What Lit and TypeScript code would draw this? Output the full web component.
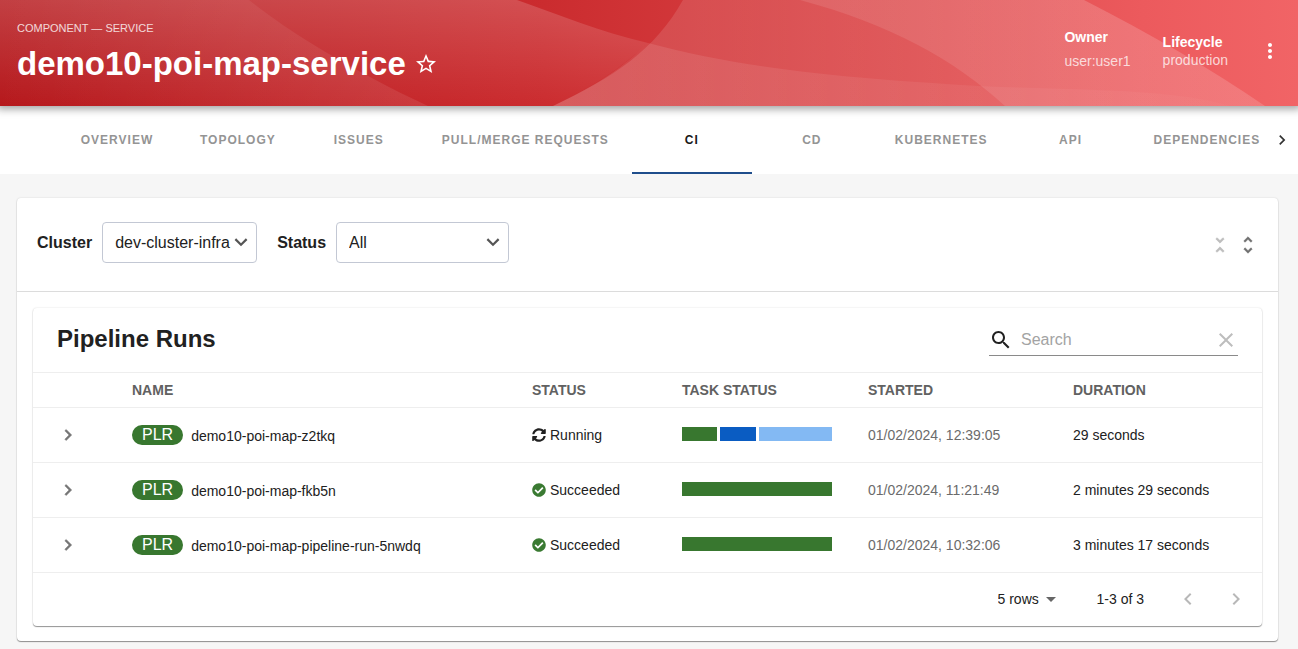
import { LitElement, html, css, svg, nothing } from "lit";
import { customElement, property, state } from "lit/decorators.js";

const ICONS: Record<string, string> = {
  star: "M22 9.24l-7.19-.62L12 2 9.19 8.63 2 9.24l5.46 4.73L5.82 21 12 17.27 18.18 21l-1.63-7.03L22 9.24zM12 15.4l-3.76 2.27 1-4.28-3.32-2.88 4.38-.38L12 6.1l1.71 4.04 4.38.38-3.32 2.88 1 4.28L12 15.4z",
  more: "M12 8c1.1 0 2-.9 2-2s-.9-2-2-2-2 .9-2 2 .9 2 2 2zm0 2c-1.1 0-2 .9-2 2s.9 2 2 2 2-.9 2-2-.9-2-2-2zm0 6c-1.1 0-2 .9-2 2s.9 2 2 2 2-.9 2-2-.9-2-2-2z",
  right: "M10 6L8.59 7.41 13.17 12l-4.58 4.59L10 18l6-6z",
  left: "M15.41 7.41L14 6l-6 6 6 6 1.41-1.41L10.83 12z",
  down: "M6.7 6.9L12 12.17l5.3-5.27L19 8.6l-7 7-7-7z",
  search:
    "M15.5 14h-.79l-.28-.27C15.41 12.59 16 11.11 16 9.5 16 5.91 13.09 3 9.5 3S3 5.91 3 9.5 5.91 16 9.5 16c1.61 0 3.09-.59 4.23-1.57l.27.28v.79l5 4.99L20.49 19l-4.99-5zm-6 0C7.01 14 5 11.99 5 9.5S7.01 5 9.5 5 14 7.01 14 9.5 11.99 14 9.5 14z",
  clear:
    "M19 6.41L17.59 5 12 10.59 6.41 5 5 6.41 10.59 12 5 17.59 6.41 19 12 13.41 17.59 19 19 17.59 13.41 12z",
  caret: "M7 10l5 5 5-5z",
  collapse:
    "M7.41 18.59L8.83 20 12 16.83 15.17 20l1.41-1.41L12 14l-4.59 4.59zm9.18-13.18L15.17 4 12 7.17 8.83 4 7.41 5.41 12 10l4.59-4.59z",
  expand:
    "M12 5.83L15.17 9l1.41-1.41L12 3 7.41 7.59 8.83 9 12 5.83zm0 12.34L8.83 15l-1.41 1.41L12 21l4.59-4.59L15.17 15 12 18.17z",
};

const SYNC =
  "M370.72 133.28C339.458 104.008 298.888 87.962 255.848 88c-77.458.068-144.328 53.178-162.791 126.85-1.344 5.363-6.122 9.15-11.651 9.15H24.103c-7.498 0-13.194-6.807-11.807-14.176C33.933 94.924 134.813 8 256 8c66.448 0 126.791 26.136 171.315 68.685L463.03 40.97C478.149 25.851 504 36.559 504 57.941V192c0 13.255-10.745 24-24 24H345.941c-21.382 0-32.09-25.851-16.971-40.971l41.75-41.749zM32 296h134.059c21.382 0 32.09 25.851 16.971 40.971l-41.75 41.75c31.262 29.273 71.835 45.319 114.876 45.28 77.418-.07 144.315-53.144 162.787-126.849 1.344-5.363 6.122-9.15 11.651-9.15h57.304c7.498 0 13.194 6.807 11.807 14.176C478.067 417.076 377.187 504 256 504c-66.448 0-126.791-26.136-171.315-68.685L48.97 471.03C33.851 486.149 8 475.441 8 454.059V320c0-13.255 10.745-24 24-24z";
const CHECK =
  "M504 256c0 136.967-111.033 248-248 248S8 392.967 8 256 119.033 8 256 8s248 111.033 248 248zM227.314 387.314l184-184c6.248-6.248 6.248-16.379 0-22.627l-22.627-22.627c-6.248-6.248-16.379-6.249-22.628 0L216 308.118l-70.059-70.059c-6.248-6.248-16.379-6.248-22.628 0l-22.627 22.627c-6.248 6.248-6.248 16.379 0 22.627l104 104c6.249 6.249 16.379 6.249 22.628.001z";

const icon = (name: string, size = 24) => html`<svg
  width=${size}
  height=${size}
  viewBox="0 0 24 24"
  fill="currentColor"
  aria-hidden="true"
>
  <path d=${ICONS[name]}></path>
</svg>`;

const base = css`
  *,
  *::before,
  *::after {
    box-sizing: border-box;
  }
  svg {
    display: block;
    flex: none;
  }
  button {
    display: inline-flex;
    align-items: center;
    justify-content: center;
    padding: 0;
    border: 0;
    background: none;
    color: inherit;
    font: inherit;
    cursor: pointer;
  }
  button:disabled {
    cursor: default;
  }
  select,
  input {
    margin: 0;
    border: 0;
    border-radius: 0;
    outline: 0;
    background: none;
    color: inherit;
    font: inherit;
    appearance: none;
  }
`;

@customElement("entity-header")
class EntityHeader extends LitElement {
  @state() private starred = false;

  static styles = [
    base,
    css`
      :host {
        display: block;
        position: relative;
        z-index: 1;
        color: #fff;
        background: linear-gradient(90deg, #b5161a 0%, #cb2c2f 42%, #de4a4c 72%, #ec5a5d 88%, #f16466 100%);
        box-shadow: 0 0 8px 3px rgba(20, 20, 20, 0.4);
      }
      .wave {
        position: absolute;
        inset: 0;
        width: 100%;
        height: 100%;
      }
      .bar {
        position: relative;
        display: flex;
        align-items: center;
        min-height: 106px;
        padding: 0 16px 4px 17px;
      }
      .heading {
        flex: 1;
        min-width: 0;
        padding-top: 2px;
      }
      .kind {
        margin: 0;
        font-size: 11px;
        line-height: 16px;
        opacity: 0.8;
      }
      .title {
        display: flex;
        align-items: center;
        gap: 8px;
        margin-top: 8px;
      }
      h1 {
        margin: 0;
        font-size: 33px;
        line-height: 40px;
      }
      dl {
        display: flex;
        align-items: center;
        gap: 32px;
        margin: 0 30px 0 0;
        font-size: 14px;
        line-height: 18px;
      }
      dt {
        font-weight: 700;
      }
      dd {
        margin: 0;
        color: rgba(255, 255, 255, 0.75);
      }
      dd a {
        color: inherit;
        text-decoration: none;
      }
      .loose {
        padding-bottom: 4px;
        line-height: 24px;
      }
    `,
  ];

  private wave() {
    const fade = (id: string, from: number, to: number, x2 = "0", y2 = "1") => svg`
      <linearGradient id=${id} x1="0" y1="0" x2=${x2} y2=${y2}>
        <stop offset="0" stop-color="#fff" stop-opacity=${from}></stop>
        <stop offset="1" stop-color="#fff" stop-opacity=${to}></stop>
      </linearGradient>`;
    return html`<svg class="wave" viewBox="0 0 1298 106" preserveAspectRatio="none" aria-hidden="true">
      <defs>
        ${fade("a", 0.01, 0.09, "1", "0")} ${fade("b", 0.17, 0)} ${fade("c", 0.13, 0.06, "1", "0")}
        ${fade("d", 0.11, 0.02, "1", "0")} ${fade("e", 0.1, 0.1)}
      </defs>
      <path fill="url(#b)" d="M0 0H517C560 15 600 32 648 43C622 68 590 88 553 106H0Z"></path>
      <path fill="url(#a)" d="M0 0H249C284 28 345 67 428 106H0Z"></path>
      <path fill="url(#c)" d="M683 0C655 50 614 77 553 106H1265C1210 68 1150 34 1084 0Z"></path>
      <path fill="url(#d)" d="M648 43C614 75 590 88 553 106H1230C1180 91 1110 90 1000 87C850 79 745 69 648 43Z"></path>
      <path fill="url(#e)" d="M800 0C890 24 955 60 1005 106H1265C1210 68 1150 34 1084 0Z"></path>
    </svg>`;
  }

  render() {
    return html`<header>
      ${this.wave()}
      <div class="bar">
        <div class="heading">
          <p class="kind">COMPONENT — SERVICE</p>
          <div class="title">
            <h1>demo10-poi-map-service</h1>
            <button
              aria-label="Add to favorites"
              aria-pressed=${this.starred}
              @click=${() => (this.starred = !this.starred)}
            >
              ${icon("star")}
            </button>
          </div>
        </div>
        <dl>
          <div class="loose">
            <dt>Owner</dt>
            <dd><a href="#user1">user:user1</a></dd>
          </div>
          <div>
            <dt>Lifecycle</dt>
            <dd>production</dd>
          </div>
        </dl>
        <button aria-label="More">${icon("more")}</button>
      </div>
    </header>`;
  }
}

@customElement("entity-tabs")
class EntityTabs extends LitElement {
  @state() private active = "CI";

  static styles = [
    base,
    css`
      :host {
        display: flex;
        background: #fff;
      }
      nav {
        display: flex;
        flex: 1;
        min-width: 0;
        overflow: hidden;
        padding-left: 57px;
      }
      a {
        display: flex;
        flex: none;
        align-items: center;
        justify-content: center;
        min-width: 120px;
        height: 68px;
        padding: 2px 23px 0;
        border-bottom: 2px solid transparent;
        color: #949494;
        font-size: 12px;
        font-weight: 700;
        letter-spacing: 1px;
        text-decoration: none;
        white-space: nowrap;
      }
      a[aria-current] {
        border-color: #1f4e8c;
        color: #181818;
      }
      a:last-child {
        min-width: 0;
        padding-right: 0;
      }
      button {
        width: 32px;
        color: #333;
      }
    `,
  ];

  private tabs = [
    "OVERVIEW",
    "TOPOLOGY",
    "ISSUES",
    "PULL/MERGE REQUESTS",
    "CI",
    "CD",
    "KUBERNETES",
    "API",
    "DEPENDENCIES",
  ];

  render() {
    return html`<nav>
        ${this.tabs.map(
          (t) => html`<a
            href="#${t.toLowerCase()}"
            aria-current=${t === this.active ? "page" : nothing}
            @click=${() => (this.active = t)}
            >${t}</a
          >`,
        )}
      </nav>
      <button aria-label="Scroll tabs right">${icon("right", 20)}</button>`;
  }
}

interface Run {
  name: string;
  status: "Running" | "Succeeded";
  tasks: { state: "done" | "active" | "pending"; share: number }[];
  started: string;
  duration: string;
}

const RUNS: Run[] = [
  {
    name: "demo10-poi-map-z2tkq",
    status: "Running",
    tasks: [
      { state: "done", share: 35 },
      { state: "active", share: 36 },
      { state: "pending", share: 73 },
    ],
    started: "01/02/2024, 12:39:05",
    duration: "29 seconds",
  },
  {
    name: "demo10-poi-map-fkb5n",
    status: "Succeeded",
    tasks: [{ state: "done", share: 1 }],
    started: "01/02/2024, 11:21:49",
    duration: "2 minutes 29 seconds",
  },
  {
    name: "demo10-poi-map-pipeline-run-5nwdq",
    status: "Succeeded",
    tasks: [{ state: "done", share: 1 }],
    started: "01/02/2024, 10:32:06",
    duration: "3 minutes 17 seconds",
  },
];

@customElement("pipeline-runs")
class PipelineRuns extends LitElement {
  @property({ attribute: false }) runs: Run[] = [];
  @state() private query = "";

  static styles = [
    base,
    css`
      :host {
        display: block;
        border-radius: 4px;
        background: #fff;
        font-size: 14px;
        line-height: 20px;
        box-shadow: 0 1px 1px rgba(0, 0, 0, 0.4), 0 0 2px rgba(0, 0, 0, 0.14);
      }
      .toolbar {
        display: flex;
        align-items: center;
        justify-content: space-between;
        height: 64px;
        padding: 0 24px;
      }
      h2 {
        margin: 0;
        padding-bottom: 2px;
        font-size: 24px;
        line-height: 32px;
      }
      .search {
        display: flex;
        align-items: center;
        width: 249px;
        height: 32px;
        border-bottom: 1px solid #8a8a8a;
      }
      .search input {
        flex: 1;
        min-width: 0;
        padding: 0 8px;
        font-size: 16px;
        line-height: 24px;
      }
      .search input::placeholder {
        color: #a3a3a3;
        opacity: 1;
      }
      .search button {
        color: #bdbdbd;
      }
      table {
        width: 100%;
        border-collapse: collapse;
        table-layout: fixed;
        text-align: left;
      }
      .toggle {
        width: 79px;
      }
      .status {
        width: 150px;
      }
      .tasks {
        width: 186px;
      }
      .started {
        width: 205px;
      }
      .duration {
        width: 209px;
      }
      th {
        height: 35px;
        padding: 0 0 0 20px;
        border: solid #eee;
        border-width: 1px 0;
        color: #616161;
      }
      td {
        height: 55px;
        padding: 0 0 0 20px;
        border-bottom: 1px solid #eee;
        white-space: nowrap;
      }
      td button {
        width: 30px;
        height: 30px;
        color: #757575;
      }
      td button svg {
        stroke: currentColor;
        stroke-width: 0.6;
      }
      .line {
        display: flex;
        align-items: center;
      }
      .name {
        padding-top: 2px;
      }
      .badge {
        margin-right: 8px;
        padding: 0 10px;
        border-radius: 10px;
        background: #38772f;
        color: #fff;
        font-size: 16px;
        line-height: 20px;
      }
      .state {
        gap: 4px;
      }
      .ok {
        color: #3a7a32;
      }
      .meter {
        display: flex;
        gap: 3px;
        width: 150px;
        height: 14px;
        margin-bottom: 2px;
      }
      .done {
        background: #38772f;
      }
      .active {
        background: #0a5cc2;
      }
      .pending {
        background: #83b9f3;
      }
      .muted {
        color: #6b6b6b;
      }
      footer {
        display: flex;
        align-items: center;
        justify-content: flex-end;
        height: 53px;
        padding: 0 14px 2px 0;
      }
      .rows {
        position: relative;
        display: flex;
        align-items: center;
        margin-right: 34px;
      }
      .rows select {
        width: 65px;
        padding: 0;
        line-height: 20px;
      }
      .rows svg {
        position: absolute;
        right: 0;
        color: #666;
        pointer-events: none;
      }
      .pager {
        display: flex;
        gap: 24px;
        margin-left: 32px;
        color: #b8b8b8;
      }
    `,
  ];

  private status(run: Run) {
    const ok = run.status === "Succeeded";
    return html`<span class="line state">
      <svg class=${ok ? "ok" : "sync"} width="14" height="14" viewBox="0 0 512 512" fill="currentColor" aria-hidden="true">
        <path d=${ok ? CHECK : SYNC}></path>
      </svg>
      ${run.status}
    </span>`;
  }

  render() {
    const shown = this.runs.filter((r) => r.name.includes(this.query));
    return html`<div class="toolbar">
        <h2>Pipeline Runs</h2>
        <div class="search">
          ${icon("search")}
          <input
            aria-label="Search"
            placeholder="Search"
            .value=${this.query}
            @input=${(e: Event) => (this.query = (e.target as HTMLInputElement).value)}
          />
          <button aria-label="Clear search" ?disabled=${!this.query} @click=${() => (this.query = "")}>
            ${icon("clear")}
          </button>
        </div>
      </div>
      <table>
        <colgroup>
          <col class="toggle" />
          <col />
          <col class="status" />
          <col class="tasks" />
          <col class="started" />
          <col class="duration" />
        </colgroup>
        <thead>
          <tr>
            <th aria-label="Expand"></th>
            <th scope="col">NAME</th>
            <th scope="col">STATUS</th>
            <th scope="col">TASK STATUS</th>
            <th scope="col">STARTED</th>
            <th scope="col">DURATION</th>
          </tr>
        </thead>
        <tbody>
          ${shown.map(
            (r) => html`<tr>
              <td><button aria-label="Expand row">${icon("right", 22)}</button></td>
              <td>
                <span class="line"><span class="badge">PLR</span><span class="name">${r.name}</span></span>
              </td>
              <td>${this.status(r)}</td>
              <td>
                <div class="meter">
                  ${r.tasks.map((t) => html`<span class=${t.state} style="flex: ${t.share} 1 0"></span>`)}
                </div>
              </td>
              <td class="muted">${r.started}</td>
              <td>${r.duration}</td>
            </tr>`,
          )}
        </tbody>
      </table>
      <footer>
        <div class="rows">
          <select aria-label="Rows per page">
            <option>5 rows</option>
            <option>10 rows</option>
            <option>20 rows</option>
          </select>
          ${icon("caret")}
        </div>
        <span>1-3 of 3</span>
        <div class="pager">
          <button aria-label="Previous page" disabled>${icon("left")}</button>
          <button aria-label="Next page" disabled>${icon("right")}</button>
        </div>
      </footer>`;
  }
}

@customElement("app-root")
class AppRoot extends LitElement {
  static styles = [
    base,
    css`
      :host {
        display: block;
        min-height: 100vh;
        background: #f6f6f6;
        color: #212121;
        font-family: "Liberation Sans", Arial, Helvetica, sans-serif;
      }
      main {
        padding: 24px 20px 8px 17px;
      }
      .card {
        border-radius: 4px;
        background: #fff;
        box-shadow: 0 1px 1px rgba(0, 0, 0, 0.4), 0 0 2px rgba(0, 0, 0, 0.14);
      }
      .filters {
        display: flex;
        align-items: center;
        padding: 24px 18px 28px 20px;
        border-bottom: 1px solid #dcdcdc;
        font-size: 16px;
        line-height: 24px;
      }
      label {
        margin-right: 10px;
        font-weight: 700;
      }
      .select {
        position: relative;
        display: flex;
        align-items: center;
        margin-right: 20px;
      }
      select {
        width: 173px;
        height: 41px;
        padding: 0 12px;
        border: 1px solid #c3c8d4;
        border-radius: 4px;
      }
      .narrow select {
        width: 155px;
      }
      .select svg {
        position: absolute;
        right: 5px;
        color: #555;
        pointer-events: none;
      }
      .tools {
        display: flex;
        gap: 4px;
        margin-left: auto;
        padding-top: 4px;
        color: #6e6e6e;
      }
      .tools svg {
        stroke: currentColor;
        stroke-width: 0.6;
      }
      .tools button {
        width: 24px;
        height: 24px;
      }
      .tools button:disabled {
        color: #bdbdbd;
      }
      .body {
        padding: 16px 16px 15px;
      }
    `,
  ];

  render() {
    return html`<entity-header></entity-header>
      <entity-tabs></entity-tabs>
      <main>
        <section class="card">
          <div class="filters">
            <label for="cluster">Cluster</label>
            <div class="select narrow">
              <select id="cluster">
                <option>dev-cluster-infra</option>
              </select>
              ${icon("down", 22)}
            </div>
            <label for="status">Status</label>
            <div class="select">
              <select id="status">
                <option>All</option>
                <option>Running</option>
                <option>Succeeded</option>
              </select>
              ${icon("down", 22)}
            </div>
            <div class="tools">
              <button aria-label="Collapse all" disabled>${icon("collapse", 22)}</button>
              <button aria-label="Expand all">${icon("expand", 22)}</button>
            </div>
          </div>
          <div class="body">
            <pipeline-runs .runs=${RUNS}></pipeline-runs>
          </div>
        </section>
      </main>`;
  }
}
